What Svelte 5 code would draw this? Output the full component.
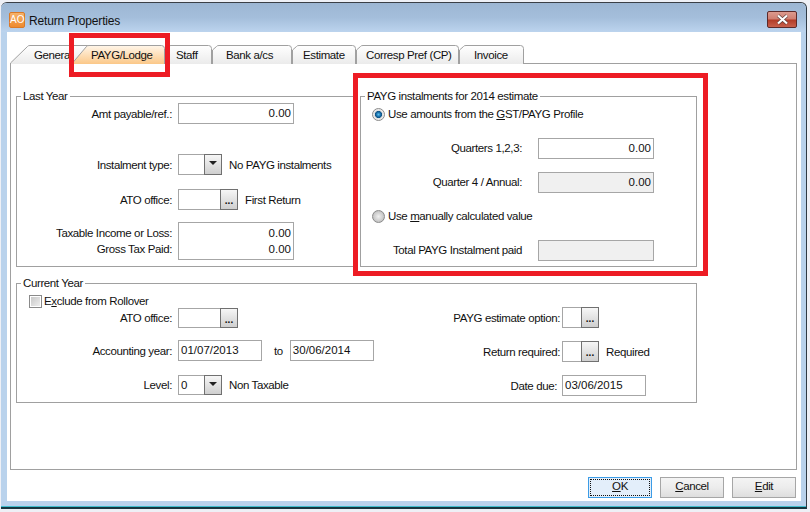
<script lang="ts">
  type Tab = { name: string; w: number; pad: number; slant: number; active?: boolean };

  const tabs: Tab[] = [
    { name: "General", w: 82, pad: 24, slant: 17 },
    { name: "PAYG/Lodge", w: 93, pad: 19, slant: 14, active: true },
    { name: "Staff", w: 47, pad: 11, slant: 3 },
    { name: "Bank a/cs", w: 80, pad: 14, slant: 4 },
    { name: "Estimate", w: 64, pad: 11, slant: 4 },
    { name: "Corresp Pref (CP)", w: 103, pad: 10, slant: 4 },
    { name: "Invoice", w: 65, pad: 15, slant: 4 },
  ];

  function tabPath(t: Tab) {
    const r = t.w - 0.5;
    return `M0.5 19 L${t.slant < 5 ? "0.5 5" : "0.5 18"} L${t.slant + 0.5} 1.5 Q${t.slant + 1} 0.5 ${t.slant + 3} 0.5 L${r - 3} 0.5 Q${r} 0.5 ${r} 3.5 L${r} 19`;
  }
</script>

<div class="window">
  <div class="titlebar">
    <span class="app-icon">AO</span>
    <span class="title">Return Properties</span>
    <span class="close">
      <svg width="13" height="11" viewBox="0 0 13 11">
        <path d="M2 1.5 L11 9.5 M11 1.5 L2 9.5" stroke="#5b3a36" stroke-width="3.4" />
        <path d="M2 1.5 L11 9.5 M11 1.5 L2 9.5" stroke="#fff" stroke-width="2.2" />
      </svg>
    </span>
  </div>

  <div class="client">
    <div class="tabs">
      {#each tabs as t}
        <div class="tab" class:active={t.active} style="width:{t.w}px">
          <svg width={t.w} height="19">
            <defs>
              <linearGradient id="tab-off" x1="0" y1="0" x2="0" y2="1">
                <stop offset="0" stop-color="#ffffff" />
                <stop offset="1" stop-color="#ebebeb" />
              </linearGradient>
              <linearGradient id="tab-on" x1="0" y1="0" x2="0" y2="1">
                <stop offset="0" stop-color="#fff6ea" />
                <stop offset="1" stop-color="#fbc888" />
              </linearGradient>
            </defs>
            <path d={tabPath(t)} fill="url(#{t.active ? 'tab-on' : 'tab-off'})" stroke="#a0a0a0" />
          </svg>
          <span class="tab-label" style="padding-left:{t.pad}px">{t.name}</span>
        </div>
      {/each}
    </div>

    <div class="panel">
      <div class="top-row">
        <div class="group last-year">
          <span class="legend">Last Year</span>
          <div class="row first">
            <span class="lbl">Amt payable/ref.:</span>
            <span class="field w116 num">0.00</span>
          </div>
          <div class="row instalment">
            <span class="lbl">Instalment type:</span>
            <span class="field combo w44"><span class="btn"><i class="arrow"></i></span></span>
            <span class="note">No PAYG instalments</span>
          </div>
          <div class="row ato">
            <span class="lbl">ATO office:</span>
            <span class="field combo w60"><span class="btn dots">...</span></span>
            <span class="note">First Return</span>
          </div>
          <div class="row taxable">
            <div class="lbl stack">
              <span>Taxable Income or Loss:</span>
              <span>Gross Tax Paid:</span>
            </div>
            <div class="field w116 stack-field">
              <span>0.00</span>
              <span>0.00</span>
            </div>
          </div>
        </div>

        <div class="group payg">
          <span class="legend">PAYG instalments for 2014 estimate</span>
          <div class="radio-row">
            <span class="radio on"></span>
            <span>Use amounts from the <u>G</u>ST/PAYG Profile</span>
          </div>
          <div class="row quarters">
            <span class="lbl">Quarters 1,2,3:</span>
            <span class="field w116 num">0.00</span>
          </div>
          <div class="row quarter4">
            <span class="lbl">Quarter 4 / Annual:</span>
            <span class="field w116 num off">0.00</span>
          </div>
          <div class="radio-row manual">
            <span class="radio"></span>
            <span>Use <u>m</u>anually calculated value</span>
          </div>
          <div class="row total">
            <span class="lbl">Total PAYG Instalment paid</span>
            <span class="field w116 off"></span>
          </div>
        </div>
      </div>

      <div class="group current">
        <span class="legend">Current Year</span>
        <div class="col-left">
          <div class="check-row">
            <span class="check"></span>
            <span>E<u>x</u>clude from Rollover</span>
          </div>
          <div class="row cy-ato">
            <span class="lbl">ATO office:</span>
            <span class="field combo w60"><span class="btn dots">...</span></span>
          </div>
          <div class="row cy-acc">
            <span class="lbl">Accounting year:</span>
            <span class="field w84">01/07/2013</span>
            <span class="to">to</span>
            <span class="field w84">30/06/2014</span>
          </div>
          <div class="row cy-level">
            <span class="lbl">Level:</span>
            <span class="field combo w44">0<span class="btn"><i class="arrow"></i></span></span>
            <span class="note">Non Taxable</span>
          </div>
        </div>
        <div class="col-right">
          <div class="row cr-option">
            <span class="lbl">PAYG estimate option:</span>
            <span class="field combo w36"><span class="btn dots">...</span></span>
          </div>
          <div class="row cr-return">
            <span class="lbl">Return required:</span>
            <span class="field combo w36"><span class="btn dots">...</span></span>
            <span class="note">Required</span>
          </div>
          <div class="row cr-due">
            <span class="lbl">Date due:</span>
            <span class="field w84">03/06/2015</span>
          </div>
        </div>
      </div>
    </div>

    <div class="footer">
      <button class="default"><span class="focus"><u>O</u>K</span></button>
      <button><u>C</u>ancel</button>
      <button><u>E</u>dit</button>
    </div>
  </div>
</div>

<!-- annotations drawn over the dialog -->
<div class="mark mark-tab"></div>
<div class="mark mark-box"></div>

<style>
  :global(*, *::before, *::after) { box-sizing: border-box; }
  :global(html, body) {
    margin: 0;
    height: 100%;
    overflow: hidden;
    background: #eef0f6;
    font-family: "Liberation Sans", Arial, sans-serif;
    font-size: 11.5px;
    letter-spacing: -0.38px;
    color: #111;
  }

  .window {
    position: absolute;
    left: 1px;
    top: 2px;
    width: 806px;
    height: 507px;
    background: linear-gradient(to top, #3fbccc 1px, #b9d2ec 1px);
    border-top: 1px solid #3a3f46;
    border-right: 1px solid #2f3a44;
    border-bottom: 2px solid #16363f;
    border-radius: 6px 6px 0 0;
    display: flex;
    flex-direction: column;
    padding: 0 5px 6px 6px;
  }

  /* ── Title bar ──────────────────────────────────────────────────────────── */
  .titlebar {
    height: 29px;
    margin: 0 -5px 0 -6px;
    padding: 0 9px 0 8px;
    flex-shrink: 0;
    display: flex;
    align-items: center;
    gap: 4px;
    background: linear-gradient(#9cb6d3, #a4bedb 50%, #bcd4ee);
    border-radius: 6px 6px 0 0;
  }

  .app-icon {
    width: 16px;
    height: 16px;
    margin-top: 4px;
    background: linear-gradient(#f6b26a, #ee8a2e);
    border: 1px solid #d97a28;
    border-radius: 2px;
    color: #fff;
    font-size: 10px;
    letter-spacing: 0;
    line-height: 14px;
    text-align: center;
  }

  .title { margin-top: 6px; font-size: 12px; letter-spacing: -0.17px; color: #111; }

  .close {
    margin-left: auto;
    margin-top: 3px;
    width: 30px;
    height: 17px;
    display: flex;
    align-items: center;
    justify-content: center;
    background: linear-gradient(#dc9a8e, #cf7e70 48%, #b13a26 52%, #c8604c);
    border: 1px solid #5c2a2a;
    border-radius: 2px;
  }

  /* ── Client area ────────────────────────────────────────────────────────── */
  .client {
    flex: 1;
    background: #fff;
    padding: 13px 4px 3px 3px;
    display: flex;
    flex-direction: column;
  }

  .tabs { display: flex; height: 19px; flex-shrink: 0; position: relative; z-index: 1; margin-bottom: -1px; }

  .tab { position: relative; height: 19px; flex-shrink: 0; white-space: nowrap; }
  .tab svg { position: absolute; left: 0; top: 0; }
  .tab-label { position: relative; display: block; line-height: 19px; padding-top: 1px; }
  .tab:first-child { margin-right: -20px; }
  .tab.active { z-index: 2; }

  .panel {
    height: 407px;
    border: 1px solid #a0a0a0;
    padding: 32px 0 0 5px;
    flex-shrink: 0;
    background: #fff;
  }

  .top-row { display: flex; gap: 2px; }

  /* ── Group boxes ────────────────────────────────────────────────────────── */
  .group {
    position: relative;
    border: 1px solid #a0a0a0;
  }

  .legend {
    position: absolute;
    left: 4px;
    top: -8px;
    padding: 0 2px;
    background: #fff;
    line-height: 14px;
    white-space: nowrap;
  }

  .last-year { width: 342px; height: 171px; }
  .payg { width: 337px; height: 171px; }

  .current {
    width: 681px;
    height: 120px;
    margin-top: 16px;
    display: flex;
  }

  /* ── Rows ───────────────────────────────────────────────────────────────── */
  .row { display: flex; align-items: center; }

  .lbl { text-align: right; flex-shrink: 0; white-space: nowrap; }
  .last-year .lbl, .col-left .lbl { width: 155px; margin-right: 6px; }
  .payg .lbl { width: 161px; margin-right: 16px; margin-top: -2px; }
  .col-right .lbl { width: 100%; }

  .stack { display: flex; flex-direction: column; gap: 2px; line-height: 14px; }

  .field {
    display: block;
    position: relative;
    height: 21px;
    flex-shrink: 0;
    border: 1px solid #a6a6a6;
    background: #fff;
    padding: 0 2px;
    letter-spacing: 0;
    line-height: 19px;
    white-space: nowrap;
  }

  .num { text-align: right; padding-right: 2px; }
  .off { background: #f0f0f0; }

  .w36 { width: 37px; }
  .w44 { width: 44px; }
  .w60 { width: 60px; }
  .w84 { width: 84px; }
  .w116 { width: 116px; }

  .stack-field {
    height: 38px;
    display: flex;
    flex-direction: column;
    align-items: flex-end;
    gap: 2px;
    padding: 3px 2px 0 0;
    line-height: 14px;
  }

  .btn {
    position: absolute;
    right: -1px;
    top: -1px;
    bottom: -1px;
    width: 18px;
    border: 1px solid #707070;
    background: linear-gradient(#f6f6f6, #cfcfcf);
    display: flex;
    align-items: center;
    justify-content: center;
  }

  .arrow {
    width: 0;
    height: 0;
    border-left: 4px solid transparent;
    border-right: 4px solid transparent;
    border-top: 4px solid #222;
    margin-top: -3px;
  }

  .dots { font-weight: 700; font-size: 10px; line-height: 14px; padding-top: 3px; letter-spacing: 0; }

  .note { margin-left: 7px; white-space: nowrap; }
  .to { margin: 0 7px 0 12px; }

  .first { margin-top: 6px; }
  .instalment { margin-top: 30px; }
  .ato { margin-top: 14px; }
  .taxable { margin-top: 12px; }

  .radio-row { display: flex; align-items: center; gap: 3px; margin: 10px 0 0 11px; line-height: 14px; }
  .radio-row.manual { margin-top: 16px; }
  .quarters { margin-top: 17px; }
  .quarter4 { margin-top: 13px; }
  .total { margin-top: 17px; }

  .radio {
    width: 13px;
    height: 13px;
    border-radius: 50%;
    border: 1px solid #8a8a8a;
    background: radial-gradient(circle closest-side, #f0f0f0, #c4c4c4);
    flex-shrink: 0;
  }

  .radio.on {
    background: radial-gradient(circle closest-side, #5cc0ee 0, #1a6ea8 40%, #0e4f80 62%, #dcdcdc 68%, #f0f0f0);
  }

  .check-row { display: flex; align-items: center; gap: 2px; margin: 10px 0 0 12px; line-height: 14px; }

  .check {
    width: 13px;
    height: 13px;
    border: 1px solid #8a8a8a;
    background: linear-gradient(135deg, #c4c4c4, #f2f2f2);
    box-shadow: inset 0 0 0 1px #fff;
    flex-shrink: 0;
  }

  .col-left { width: 400px; flex-shrink: 0; }
  .cy-ato { margin-top: 0; }
  .cy-acc { margin-top: 12px; }
  .cy-level { margin-top: 14px; }
  .cy-ato .field, .cy-level .field { height: 20px; }

  .col-right { padding-top: 23px; flex: 1; }
  .col-right .row { justify-content: flex-start; }
  .col-right .lbl { width: 143px; margin-right: 2px; }
  .cr-return { margin-top: 13px; }
  .cr-due { margin-top: 13px; }
  .cr-due .lbl { width: 140px; margin-right: 5px; }

  /* ── Footer buttons ─────────────────────────────────────────────────────── */
  .footer {
    margin-top: 7px;
    padding-right: 1px;
    display: flex;
    justify-content: flex-end;
    gap: 8px;
  }

  button {
    width: 64px;
    height: 21px;
    padding: 0 0 2px;
    border: 1px solid #a6a6a6;
    background: linear-gradient(#f4f4f4, #ececec 50%, #dedede);
    color: #111;
    font: inherit;
    letter-spacing: inherit;
    line-height: 17px;
  }

  button.default {
    border-color: #3c9ce6;
    background: #e3eefa;
    padding: 1px;
  }

  .focus {
    display: block;
    height: 17px;
    line-height: 13px;
    border: 1px dotted #111;
  }

  /* ── Red annotations ────────────────────────────────────────────────────── */
  .mark { position: absolute; border: 5px solid #ed1c24; z-index: 5; }
  .mark-tab { left: 69px; top: 33px; width: 101px; height: 44px; }
  .mark-box { left: 353px; top: 73px; width: 355px; height: 203px; }
</style>
